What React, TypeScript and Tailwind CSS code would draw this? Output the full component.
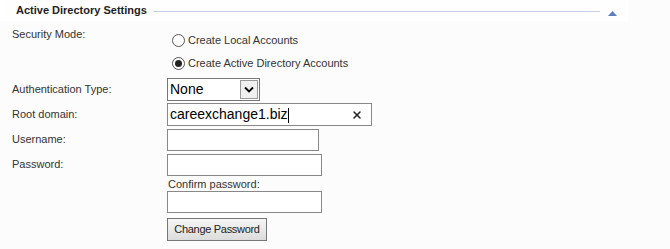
import { X } from "lucide-react";

const font = { fontFamily: '"Liberation Sans", Arial, sans-serif' };

function Radio({ checked, label }: { checked?: boolean; label: string }) {
  return (
    <div className="flex items-center h-[23px]">
      <span className="w-[13px] h-[13px] rounded-full border border-[#555] bg-white flex items-center justify-center">
        {checked && <span className="w-[7px] h-[7px] rounded-full bg-[#222]" />}
      </span>
      <span className="ml-[3px] text-[11px] text-[#333]">{label}</span>
    </div>
  );
}

function Row({ label, children }: { label: string; children: React.ReactNode }) {
  return (
    <div className="flex items-center h-[25px]">
      <div className="w-[155px] pl-[12px] text-[11px] text-[#333]">{label}</div>
      {children}
    </div>
  );
}

export default function App() {
  return (
    <div className="w-[670px] h-[249px] bg-[#fcfcfc] overflow-hidden" style={font}>
      <div className="w-[628px] h-[21px] bg-[#fefefe] border border-white flex items-center pl-[15px] pr-[10px]">
        <span className="text-[11px] font-bold text-[#222] whitespace-nowrap">Active Directory Settings</span>
        <div className="flex-1 h-px bg-[#c5d0e6] mx-[6px] mt-[1px]" />
        <svg width="9" height="5" viewBox="0 0 9 5" className="mt-[5px] ml-[2px]">
          <path d="M4.5 0 L9 5 L0 5 Z" fill="#5b7fc0" />
        </svg>
      </div>

      <div className="flex pt-[4px]">
        <div className="w-[172px] pl-[12px] text-[11px] text-[#333] pt-[1px]">Security Mode:</div>
        <div className="pt-[4px]">
          <Radio label="Create Local Accounts" />
          <Radio checked label="Create Active Directory Accounts" />
        </div>
      </div>

      <div className="mt-[2px]">
        <Row label="Authentication Type:">
          <div className="ml-[12px] w-[93px] h-[23px] border border-[#777] bg-white flex items-center">
            <span className="flex-1 pl-[2px] text-[14px] text-black">None</span>
            <span className="w-[18px] h-[19px] mr-[1px] border border-[#999] bg-[#f0f0f0] flex items-center justify-center">
              <svg width="10" height="7" viewBox="0 0 10 7">
                <path d="M1 1.5 L5 5.5 L9 1.5" stroke="#000" strokeWidth="1.8" fill="none" />
              </svg>
            </span>
          </div>
        </Row>
        <Row label="Root domain:">
          <div className="ml-[12px] w-[205px] h-[23px] border border-[#888] bg-white flex items-center">
            <span className="flex-1 pl-[2px] text-[14px] text-black">
              careexchange1.biz<span className="inline-block w-px h-[15px] bg-black align-middle" />
            </span>
            <X size={12} strokeWidth={3} className="mr-[8px] text-[#222]" />
          </div>
        </Row>
        <Row label="Username:">
          <div className="ml-[12px] w-[152px] h-[22px] border border-[#888] bg-white" />
        </Row>
        <Row label="Password:">
          <div className="ml-[12px] w-[155px] h-[22px] border border-[#888] bg-white" />
        </Row>
      </div>

      <div className="pl-[167px]">
        <div className="text-[11px] text-[#333] pl-[1px] leading-[14px]">Confirm password:</div>
        <div className="w-[155px] h-[22px] border border-[#888] bg-white" />
        <button className="mt-[5px] w-[100px] h-[23px] border border-[#777] bg-gradient-to-b from-[#f6f6f6] to-[#dcdcdc] text-[11px] tracking-[-0.3px] text-[#222]">
          Change Password
        </button>
      </div>
    </div>
  );
}
